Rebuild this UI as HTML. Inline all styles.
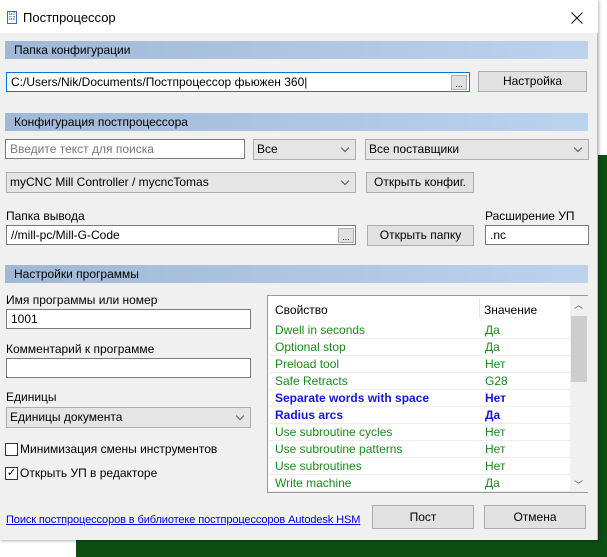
<!DOCTYPE html>
<html><head><meta charset="utf-8"><style>
*{box-sizing:border-box;margin:0;padding:0}
body{width:607px;height:557px;position:relative;overflow:hidden;background:#fff;font-family:"Liberation Sans","DejaVu Sans",sans-serif;font-size:12px;color:#000}
.a{position:absolute}
.hdr{position:absolute;left:5px;width:583px;height:18px;background:linear-gradient(90deg,#9fb8d6,#bcd3ee);padding-left:9px;line-height:18px}
.inp{position:absolute;background:#fff;border:1px solid #7a7a7a;height:20px;line-height:18px;padding-left:4px;white-space:nowrap;overflow:hidden}
.btn{position:absolute;background:#e1e1e1;border:1px solid #adadad;height:21px;line-height:19px;text-align:center}
.sel{position:absolute;background:#e5e5e5;border:1px solid #adadad;height:21px;line-height:19px;padding-left:3px}
.sel:after{content:"";position:absolute;right:7px;top:5px;width:5px;height:5px;border-right:1px solid #555;border-bottom:1px solid #555;transform:rotate(45deg)}
.dots{position:absolute;width:16px;height:15px;background:#e1e1e1;border:1px solid #adadad;font-size:9px;text-align:center;line-height:16px}
.row{position:absolute;left:1px;width:301px;height:17px;border-bottom:1px solid #eeeeee;color:#1a8a1a;line-height:17px}
.row span{position:absolute}
.row .k{left:6px}.row .v{left:216px}
.row.b{color:#1414e0;font-weight:bold}
.cb{position:absolute;width:13px;height:13px;border:1px solid #333;background:#fff}
</style></head><body>
<div class="a" style="left:598px;top:155px;width:9px;height:402px;background:#0c4d12"></div>
<div class="a" style="left:76px;top:540px;width:531px;height:17px;background:#0c4d12"></div>
<div class="a" style="left:0;top:0;width:598px;height:540px;background:#f0f0f0;border-right:1px solid #bbb;box-shadow:1px 1px 3px rgba(0,0,0,.3)"></div>
<div class="a" style="left:0;top:0;width:598px;height:33px;background:#fff"></div>
<div class="a" style="left:7px;top:11px;width:10px;height:13px;border:1px solid #3a6ab0;font-size:5px;line-height:5px;color:#2a5aa0;text-align:center">G1<br>G2</div>
<div class="a" style="left:23px;top:10px;font-size:13px">Постпроцессор</div>
<svg class="a" style="left:571px;top:12px" width="12" height="12"><path d="M0.5 0.5L11.5 11.5M11.5 0.5L0.5 11.5" stroke="#111" stroke-width="1.1"/></svg>

<div class="hdr" style="top:41px">Папка конфигурации</div>
<div class="inp" style="left:6px;top:72px;width:464px;border-color:#0078d7">C:/Users/Nik/Documents/Постпроцессор фьюжен 360|</div>
<div class="dots" style="left:451px;top:75px">...</div>
<div class="btn" style="left:478px;top:71px;width:109px">Настройка</div>

<div class="hdr" style="top:113px">Конфигурация постпроцессора</div>
<div class="inp" style="left:5px;top:139px;width:240px;color:#777">Введите текст для поиска</div>
<div class="sel" style="left:253px;top:139px;width:103px">Все</div>
<div class="sel" style="left:365px;top:139px;width:224px">Все поставщики</div>
<div class="sel" style="left:6px;top:172px;width:350px">myCNC Mill Controller / mycncTomas</div>
<div class="btn" style="left:366px;top:172px;width:108px">Открыть конфиг.</div>

<div class="a" style="left:6px;top:209px">Папка вывода</div>
<div class="inp" style="left:6px;top:225px;width:350px">//mill-pc/Mill-G-Code</div>
<div class="dots" style="left:338px;top:228px">...</div>
<div class="btn" style="left:367px;top:225px;width:107px">Открыть папку</div>
<div class="a" style="left:485px;top:209px">Расширение УП</div>
<div class="inp" style="left:485px;top:225px;width:104px">.nc</div>

<div class="hdr" style="top:265px">Настройки программы</div>
<div class="a" style="left:6px;top:293px">Имя программы или номер</div>
<div class="inp" style="left:6px;top:309px;width:245px">1001</div>
<div class="a" style="left:6px;top:342px">Комментарий к программе</div>
<div class="inp" style="left:6px;top:358px;width:245px"></div>
<div class="a" style="left:6px;top:390px">Единицы</div>
<div class="sel" style="left:6px;top:407px;width:245px">Единицы документа</div>
<div class="cb" style="left:5px;top:443px"></div>
<div class="a" style="left:20px;top:442px">Минимизация смены инструментов</div>
<div class="cb" style="left:5px;top:467px;font-size:11px;line-height:11px;text-align:center">✓</div>
<div class="a" style="left:20px;top:466px">Открыть УП в редакторе</div>

<div class="a" style="left:267px;top:295px;width:321px;height:198px;background:#fff;border:1px solid #999">
<div class="a" style="left:7px;top:7px">Свойство</div>
<div class="a" style="left:211px;top:2px;width:1px;height:20px;background:#e5e5e5"></div>
<div class="a" style="left:216px;top:7px">Значение</div>
<div class="a" style="left:302px;top:0;width:18px;height:196px;background:#f0f0f0"></div>
<div class="a" style="left:303px;top:20px;width:16px;height:66px;background:#cdcdcd"></div>
<div class="a" style="left:306px;top:2px;font-size:9px;color:#555">︿</div>
<div class="a" style="left:306px;top:182px;font-size:9px;color:#555">﹀</div>
<div class="row" style="top:26px"><span class="k">Dwell in seconds</span><span class="v">Да</span></div>
<div class="row" style="top:43px"><span class="k">Optional stop</span><span class="v">Да</span></div>
<div class="row" style="top:60px"><span class="k">Preload tool</span><span class="v">Нет</span></div>
<div class="row" style="top:77px"><span class="k">Safe Retracts</span><span class="v">G28</span></div>
<div class="row b" style="top:94px"><span class="k">Separate words with space</span><span class="v">Нет</span></div>
<div class="row b" style="top:111px"><span class="k">Radius arcs</span><span class="v">Да</span></div>
<div class="row" style="top:128px"><span class="k">Use subroutine cycles</span><span class="v">Нет</span></div>
<div class="row" style="top:145px"><span class="k">Use subroutine patterns</span><span class="v">Нет</span></div>
<div class="row" style="top:162px"><span class="k">Use subroutines</span><span class="v">Нет</span></div>
<div class="row" style="top:179px"><span class="k">Write machine</span><span class="v">Да</span></div>
</div>

<div class="a" style="left:6px;top:514px;color:#0000ee;text-decoration:underline;font-size:11px;letter-spacing:-0.1px;white-space:nowrap">Поиск постпроцессоров в библиотеке постпроцессоров Autodesk HSM</div>
<div class="btn" style="left:372px;top:505px;width:102px;height:24px;line-height:22px">Пост</div>
<div class="btn" style="left:484px;top:505px;width:102px;height:24px;line-height:22px">Отмена</div>
</body></html>
